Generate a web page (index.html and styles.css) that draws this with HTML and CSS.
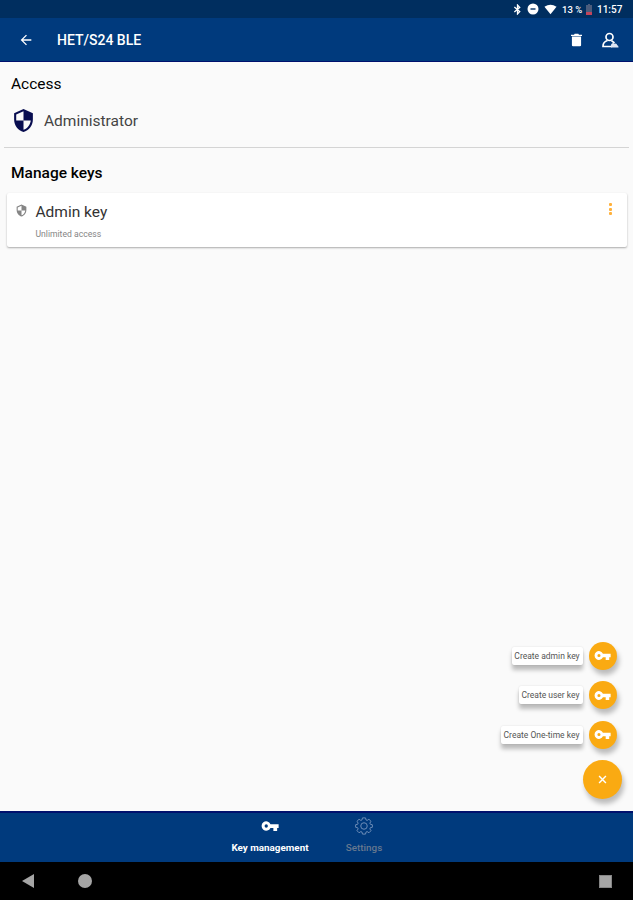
FILE: index.html
```html
<!DOCTYPE html>
<html lang="en">
<head>
<meta charset="utf-8">
<title>HET/S24 BLE</title>
<link rel="stylesheet" href="styles.css">
</head>
<body>
<svg class="defs" width="0" height="0">
  <symbol id="key" viewBox="0 0 24 24"><path fill-rule="evenodd" d="M12.650 9.500A6.200 6.200 0 1 0 12.650 14.500H16.500v4h5v-4H23.500v-5zM7 14.200a2.200 2.200 0 1 1 0-4.400 2.200 2.200 0 0 1 0 4.400z"/></symbol>
  <symbol id="shield" viewBox="0 0 24 24"><path fill-rule="evenodd" d="M12 1L3 5v6c0 5.550 3.840 10.740 9 12 5.160-1.260 9-6.450 9-12V5zM12 12h7c-.53 4.120-3.280 7.790-7 8.940V12H5V6.300l7-3.110z"/></symbol>
</svg>
<div class="screen">
  <header>
    <div class="status">
      <svg class="bt" viewBox="0 0 10 12"><path d="M1.500 3.200l6 5.200L5 11V1l2.500 2.600-6 5.200"/></svg>
      <svg class="dnd" viewBox="0 0 12 12"><circle cx="6" cy="6" r="5.500" fill="#fff"/><path d="M3.500 6h5" stroke="#003064" stroke-width="1.400"/></svg>
      <svg class="wifi" viewBox="0 0 14 11"><path d="M.5 2.500Q7-1.500 13.500 2.500L7 10.500z" fill="#fff"/></svg>
      <span class="percent">13 %</span>
      <svg class="battery" viewBox="0 0 6 11"><path d="M0 1h2V0h2v1h2v7H0z" fill="#4b5c7c"/><path d="M0 8h6v3H0z" fill="#c0455c"/></svg>
      <span class="time">11:57</span>
    </div>
    <div class="appbar">
      <svg class="back" viewBox="0 0 24 24"><path d="M20 11H7.830l5.590-5.590L12 4l-8 8 8 8 1.410-1.410L7.830 13H20z"/></svg>
      <h1>HET/S24 BLE</h1>
      <svg class="trash" viewBox="0 0 12 14"><path d="M0 1.200h3.300L4 .3h4l.7.9H12v1.300H0zM1 3.200h10v9.400a1.200 1.200 0 0 1-1.200 1.200H2.200A1.200 1.200 0 0 1 1 12.600z"/></svg>
      <svg class="user" viewBox="0 0 17 17"><circle cx="7.500" cy="5" r="3.500"/><path d="M5.500 8.500c-3 .8-4.500 2.700-4.500 6h9M9.500 8.700l3 2.300"/><path class="solid" d="M9 15.500v-2.600a2 2 0 0 1 3.500-1.200 2 2 0 0 1 2.700 1.500c1 .2 1.300.9 1.300 2.300z"/></svg>
    </div>
  </header>
  <main>
    <h2>Access</h2>
    <div class="role"><svg><use href="#shield"/></svg><span>Administrator</span></div>
    <hr>
    <h2 class="manage">Manage keys</h2>
    <section class="card">
      <svg class="mini"><use href="#shield"/></svg>
      <div class="details"><h3>Admin key</h3><p>Unlimited access</p></div>
      <div class="more"><i></i><i></i><i></i></div>
    </section>
    <div class="actions">
      <div class="action"><span class="label admin">Create admin key</span><button><svg><use href="#key"/></svg></button></div>
      <div class="action"><span class="label userkey">Create user key</span><button><svg><use href="#key"/></svg></button></div>
      <div class="action"><span class="label once">Create One-time key</span><button><svg><use href="#key"/></svg></button></div>
      <button class="close"><svg viewBox="0 0 10 10"><path d="M1.200 1.200l7.600 7.600m0-7.600L1.200 8.800"/></svg></button>
    </div>
  </main>
  <nav class="tabs">
    <div class="tab active"><svg><use href="#key"/></svg><span>Key management</span></div>
    <div class="tab settings"><svg viewBox="0 0 20 20"><path d="M8.300 1h3.400l.5 2.200 1.300.6 2-1.300 2.300 2.300-1.300 2 .6 1.300 2.200.5v2.800l-2.200.5-.6 1.300 1.300 2-2.300 2.300-2-1.300-1.300.6-.5 2.200H8.300l-.5-2.200-1.300-.6-2 1.300-2.300-2.300 1.300-2-.6-1.300L.7 11.400V8.600l2.200-.5.6-1.300-1.300-2 2.300-2.300 2 1.300 1.300-.6z"/><circle cx="10" cy="10" r="3.600"/></svg><span>Settings</span></div>
  </nav>
  <footer class="system">
    <svg class="sysback" viewBox="0 0 12 14"><path d="M12 0v14L0 7z"/></svg>
    <i class="home"></i><i class="recent"></i>
  </footer>
</div>
</body>
</html>
```
FILE: styles.css
```css
* { box-sizing: border-box; }
body { margin: 0; font-family: Roboto, sans-serif; }
h1, h2, h3, p { margin: 0; white-space: nowrap; }
svg { display: block; flex: none; }
.defs { position: absolute; }
.screen { width: 633px; height: 900px; display: flex; flex-direction: column; background: #fafafa; overflow: hidden; }
header { height: 62px; flex: none; color: #fff; background: #003a7d; border-bottom: 1px solid #00116d; }
.status { height: 18px; background: #002e5f; display: flex; align-items: center; padding-left: 513px; font-size: 9.5px; font-weight: 500; white-space: nowrap; }
.bt { width: 9px; height: 11px; fill: none; stroke: #fff; stroke-width: 1.4; }
.dnd { width: 12px; height: 12px; margin-left: 5px; }
.wifi { width: 13px; height: 11px; margin-left: 5px; }
.percent { margin-left: 5px; width: 22px; }
.battery { width: 6px; height: 11px; margin-left: 2px; }
.time { margin-left: 5px; font-size: 10px; }
.appbar { height: 43px; display: flex; align-items: center; padding: 1px 14px 0 18px; }
.back { width: 16px; height: 16px; fill: #fff; }
h1 { margin-left: 23px; font-size: 14px; font-weight: 500; line-height: 20px; flex: 1; }
.trash { width: 11px; height: 14px; fill: #fff; margin-right: 20px; }
.user { width: 17px; height: 17px; fill: none; stroke: #fff; stroke-width: 1.7; }
.user .solid { fill: #dce4f2; stroke: none; }
main { flex: 1; position: relative; padding: 12px 4px 0; }
h2 { margin-left: 7px; font-size: 15.5px; font-weight: 400; line-height: 20px; color: #000; }
.role { display: flex; align-items: center; margin-top: 13px; height: 26px; padding-left: 7px; font-size: 15.5px; color: #444; }
.role svg { width: 25px; height: 25px; fill: #080d50; }
.role span { margin: 2px 0 0 8px; line-height: 20px; }
hr { margin: 14px 0 0; border: 0; height: 1px; background: #d4d4d4; }
h2.manage { margin-top: 15px; font-weight: 500; }
.card { height: 54px; margin: 10px 2px 0 3px; background: #fff; border-radius: 2px; box-shadow: 0 1px 2px #aaa; display: flex; padding: 8px 15px 0 8px; }
.mini { width: 13px; height: 13px; margin-top: 3px; fill: #858585; }
.details { margin: 1px 0 0 7.5px; flex: 1; }
h3 { font-size: 15.5px; font-weight: 400; line-height: 20px; color: #333; }
p { margin-top: 6px; font-size: 8.6px; line-height: 12px; color: #858585; }
.more { padding-top: 2px; }
.more i { display: block; width: 3px; height: 3px; background: #ffb13b; border-radius: 1px; margin-bottom: 1.5px; }
.actions { position: absolute; right: 11px; bottom: 12px; display: flex; flex-direction: column; align-items: flex-end; gap: 11.4px; }
.action { display: flex; align-items: center; padding-right: 5.5px; height: 28px; }
.label { height: 18px; line-height: 18px; text-align: center; background: #fff; border-radius: 2px; box-shadow: 0 5px 4px rgba(0,0,0,.25), 0 0 2px rgba(0,0,0,.12); color: #555; font-size: 8.5px; white-space: nowrap; margin-right: 6px; }
.admin { width: 71px; }
.userkey { width: 64px; }
.once { width: 82px; }
button { border: 0; padding: 0; width: 28px; height: 28px; border-radius: 50%; background: #faaa12; display: grid; place-items: center; box-shadow: 2px 5px 5px rgba(0,0,0,.25); }
button svg { width: 17px; height: 17px; fill: #fff; }
.close { width: 39px; height: 39px; }
.close svg { width: 9px; height: 9px; stroke: #fff; stroke-width: 1.6; }
.tabs { height: 51px; flex: none; background: #003a7d; border-top: 2px solid #00116d; display: flex; padding-left: 223px; }
.tab { width: 94px; display: flex; flex-direction: column; align-items: center; font-size: 9.85px; line-height: 12px; white-space: nowrap; }
.tab svg { width: 18px; height: 18px; margin: 4px 0 7px; fill: #fff; }
.active { font-weight: 700; color: #fff; }
.tab.settings { color: #66788f; font-weight: 500; }
.tab.settings svg { fill: none; stroke: #7895bd; stroke-width: 1; }
.system { height: 38px; flex: none; background: #000; display: flex; align-items: center; padding: 0 21px 0 22px; }
.sysback { width: 12px; height: 14px; fill: #a5a5a5; }
.home { width: 14px; height: 14px; margin-left: 44px; border-radius: 50%; background: #a5a5a5; }
.recent { width: 13px; height: 13px; margin-left: auto; background: #a5a5a5; border: 1px solid #858585; }
```
